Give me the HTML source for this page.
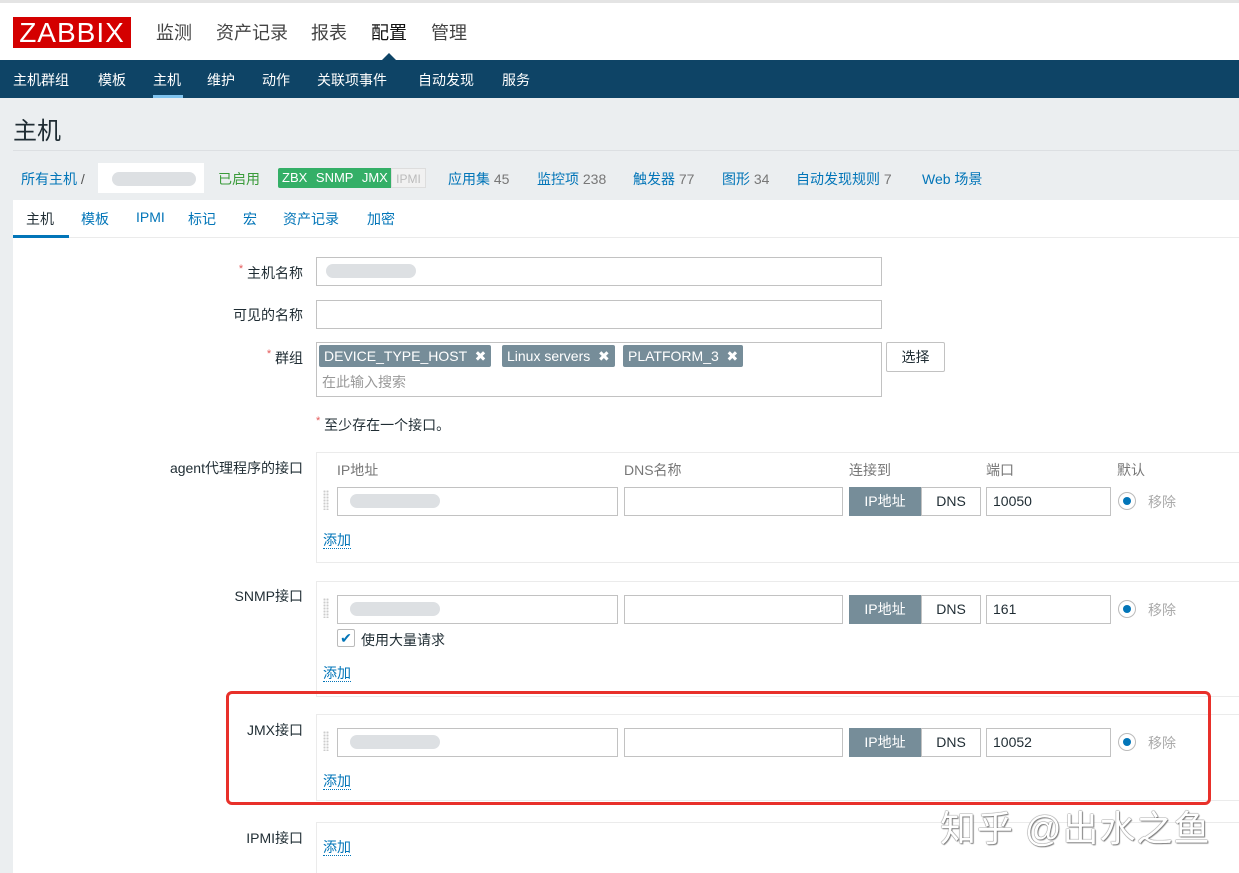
<!DOCTYPE html>
<html><head><meta charset="utf-8"><style>
*{margin:0;padding:0;box-sizing:border-box}
html,body{width:1239px;height:873px;overflow:hidden}
body{position:relative;background:#ebeef0;font-family:"Liberation Sans","Noto Sans CJK SC",sans-serif;font-size:14px;color:#1f2c33}
.a{position:absolute;white-space:nowrap}
.inp{position:absolute;background:#fff;border:1px solid #c2c2c2;height:29px}
.lbl{position:absolute;right:936px;text-align:right;font-size:14px;white-space:nowrap}
.req{color:#e45959;font-size:11px;vertical-align:top}
.box{position:absolute;left:316px;width:930px;border:1px solid #ebebeb;background:#fff}
.lnk{color:#0275b8;border-bottom:1px dotted #0275b8;font-size:14px}
.blur{position:absolute;background:#dde0e3;border-radius:8px;height:14px}
.ipb{position:absolute;background:#768d99;color:#fff;height:29px;width:72px;text-align:center;line-height:28px;font-size:14px}
.dnsb{position:absolute;background:#fff;border:1px solid #c2c2c2;height:29px;width:60px;text-align:center;line-height:27px;font-size:14px}
.rad{position:absolute;width:18px;height:18px;border:1px solid #bbb;border-radius:50%;background:#fff}
.rad:after{content:"";position:absolute;left:4px;top:4px;width:8px;height:8px;border-radius:50%;background:#0275b8}
.drag{position:absolute;width:6px;height:20px;background-image:radial-gradient(#ccc 1px,transparent 1.2px);background-size:3px 3px}
.tag{position:absolute;top:345px;height:22px;background:#768d99;color:#fff;font-size:14px;line-height:22px;padding:0 5px;border-radius:2px}
.nv{position:absolute;top:70px;color:#fff;font-size:14px}
</style></head><body>
<div class="a" style="left:0;top:0;width:1239px;height:60px;background:#fff;border-top:3px solid #e4e4e4"></div>
<div class="a" style="left:13px;top:17px;width:118px;height:31px;background:#d40000;color:#fff;font-size:28px;line-height:31px;text-align:center;letter-spacing:1px">ZABBIX</div>
<div class="a" style="left:156px;top:19px;font-size:18px;color:#444">监测</div>
<div class="a" style="left:216px;top:19px;font-size:18px;color:#444">资产记录</div>
<div class="a" style="left:311px;top:19px;font-size:18px;color:#444">报表</div>
<div class="a" style="left:371px;top:19px;font-size:18px;color:#111">配置</div>
<div class="a" style="left:431px;top:19px;font-size:18px;color:#444">管理</div>
<div class="a" style="left:0;top:60px;width:1239px;height:38px;background:#0e4466"></div>
<div class="a" style="left:382px;top:53px;width:0;height:0;border-left:7px solid transparent;border-right:7px solid transparent;border-bottom:7px solid #0e4466"></div>
<div class="nv" style="left:13px">主机群组</div>
<div class="nv" style="left:98px">模板</div>
<div class="nv" style="left:153px">主机</div>
<div class="nv" style="left:207px">维护</div>
<div class="nv" style="left:262px">动作</div>
<div class="nv" style="left:317px">关联项事件</div>
<div class="nv" style="left:418px">自动发现</div>
<div class="nv" style="left:502px">服务</div>
<div class="a" style="left:153px;top:95px;width:30px;height:3px;background:#7fc3ee"></div>
<div class="a" style="left:13px;top:111px;font-size:24px;color:#1f2c33">主机</div>
<div class="a" style="left:13px;top:150px;width:1226px;height:1px;background:#dcdfe2"></div>
<div class="a" style="left:21px;top:169px;color:#0275b8">所有主机 <span style="color:#555">/</span></div>
<div class="a" style="left:98px;top:163px;width:106px;height:30px;background:#fff"></div>
<div class="blur" style="left:112px;top:172px;width:84px"></div>
<div class="a" style="left:218px;top:169px;color:#3a9b3a">已启用</div>
<div class="a" style="left:278px;top:168px;width:113px;height:20px;background:#34af67;color:#fff;font-size:13px;line-height:20px;padding-left:4px;word-spacing:5px;border-radius:2px 0 0 2px">ZBX SNMP JMX</div>
<div class="a" style="left:391px;top:168px;width:35px;height:20px;background:#f1f1f1;color:#bbb;font-size:12px;line-height:20px;text-align:center;border:1px solid #ddd">IPMI</div>
<div class="a" style="left:448px;top:169px;color:#0275b8">应用集 <span style="color:#777">45</span></div>
<div class="a" style="left:537px;top:169px;color:#0275b8">监控项 <span style="color:#777">238</span></div>
<div class="a" style="left:633px;top:169px;color:#0275b8">触发器 <span style="color:#777">77</span></div>
<div class="a" style="left:722px;top:169px;color:#0275b8">图形 <span style="color:#777">34</span></div>
<div class="a" style="left:796px;top:169px;color:#0275b8">自动发现规则 <span style="color:#777">7</span></div>
<div class="a" style="left:922px;top:169px;color:#0275b8">Web 场景</div>
<div class="a" style="left:13px;top:200px;width:1226px;height:673px;background:#fff"></div>
<div class="a" style="left:13px;top:237px;width:1226px;height:1px;background:#ebebeb"></div>
<div class="a" style="left:13px;top:235px;width:56px;height:3px;background:#0275b8"></div>
<div class="a" style="left:26px;top:209px;color:#1f2c33">主机</div>
<div class="a" style="left:81px;top:209px;color:#0275b8">模板</div>
<div class="a" style="left:136px;top:209px;color:#0275b8">IPMI</div>
<div class="a" style="left:188px;top:209px;color:#0275b8">标记</div>
<div class="a" style="left:243px;top:209px;color:#0275b8">宏</div>
<div class="a" style="left:283px;top:209px;color:#0275b8">资产记录</div>
<div class="a" style="left:367px;top:209px;color:#0275b8">加密</div>

<div class="lbl" style="top:263px"><span class="req">*</span> 主机名称</div>
<div class="inp" style="left:316px;top:257px;width:566px"></div>
<div class="blur" style="left:326px;top:264px;width:90px"></div>
<div class="lbl" style="top:305px">可见的名称</div>
<div class="inp" style="left:316px;top:300px;width:566px"></div>
<div class="lbl" style="top:348px"><span class="req">*</span> 群组</div>
<div class="inp" style="left:316px;top:342px;width:566px;height:55px"></div>
<div class="tag" style="left:319px">DEVICE_TYPE_HOST &nbsp;✖</div>
<div class="tag" style="left:502px">Linux servers &nbsp;✖</div>
<div class="tag" style="left:623px">PLATFORM_3 &nbsp;✖</div>
<div class="a" style="left:322px;top:372px;color:#999">在此输入搜索</div>
<div class="a" style="left:886px;top:342px;width:59px;height:30px;border:1px solid #c2c2c2;border-radius:2px;background:#fff;text-align:center;line-height:28px">选择</div>
<div class="a" style="left:316px;top:415px"><span class="req">*</span> 至少存在一个接口。</div>

<div class="lbl" style="top:458px">agent代理程序的接口</div>
<div class="box" style="top:452px;height:111px"></div>
<div class="a" style="left:337px;top:460px;color:#777">IP地址</div>
<div class="a" style="left:624px;top:460px;color:#777">DNS名称</div>
<div class="a" style="left:849px;top:460px;color:#777">连接到</div>
<div class="a" style="left:986px;top:460px;color:#777">端口</div>
<div class="a" style="left:1117px;top:460px;color:#777">默认</div>
<div class="drag" style="left:323px;top:490px"></div>
<div class="inp" style="left:337px;top:487px;width:281px"></div>
<div class="blur" style="left:350px;top:494px;width:90px"></div>
<div class="inp" style="left:624px;top:487px;width:219px"></div>
<div class="ipb" style="left:849px;top:487px">IP地址</div>
<div class="dnsb" style="left:921px;top:487px">DNS</div>
<div class="inp" style="left:986px;top:487px;width:125px;padding-left:6px;line-height:27px">10050</div>
<div class="rad" style="left:1118px;top:492px"></div>
<div class="a" style="left:1148px;top:492px;color:#aaa">移除</div>
<div class="a" style="left:323px;top:530px"><span class="lnk">添加</span></div>

<div class="lbl" style="top:586px">SNMP接口</div>
<div class="box" style="top:581px;height:116px"></div>
<div class="drag" style="left:323px;top:598px"></div>
<div class="inp" style="left:337px;top:595px;width:281px"></div>
<div class="blur" style="left:350px;top:602px;width:90px"></div>
<div class="inp" style="left:624px;top:595px;width:219px"></div>
<div class="ipb" style="left:849px;top:595px">IP地址</div>
<div class="dnsb" style="left:921px;top:595px">DNS</div>
<div class="inp" style="left:986px;top:595px;width:125px;padding-left:6px;line-height:27px">161</div>
<div class="rad" style="left:1118px;top:600px"></div>
<div class="a" style="left:1148px;top:600px;color:#aaa">移除</div>
<div class="a" style="left:337px;top:629px;width:18px;height:18px;border:1px solid #bbb;border-radius:2px;color:#0275b8;font-size:14px;line-height:16px;text-align:center">✔</div>
<div class="a" style="left:361px;top:630px">使用大量请求</div>
<div class="a" style="left:323px;top:663px"><span class="lnk">添加</span></div>

<div class="lbl" style="top:720px">JMX接口</div>
<div class="box" style="top:714px;height:87px"></div>
<div class="drag" style="left:323px;top:731px"></div>
<div class="inp" style="left:337px;top:728px;width:281px"></div>
<div class="blur" style="left:350px;top:735px;width:90px"></div>
<div class="inp" style="left:624px;top:728px;width:219px"></div>
<div class="ipb" style="left:849px;top:728px">IP地址</div>
<div class="dnsb" style="left:921px;top:728px">DNS</div>
<div class="inp" style="left:986px;top:728px;width:125px;padding-left:6px;line-height:27px">10052</div>
<div class="rad" style="left:1118px;top:733px"></div>
<div class="a" style="left:1148px;top:733px;color:#aaa">移除</div>
<div class="a" style="left:323px;top:771px"><span class="lnk">添加</span></div>

<div class="lbl" style="top:828px">IPMI接口</div>
<div class="box" style="top:822px;height:60px"></div>
<div class="a" style="left:323px;top:837px"><span class="lnk">添加</span></div>

<div class="a" style="left:226px;top:691px;width:985px;height:114px;border:3px solid #e8302a;border-radius:6px"></div>
<div class="a" style="left:940px;top:800px;font-size:36px;letter-spacing:1px;color:#fff;text-shadow:0 0 1px #666,0 0 1px #666,1px 1px 1px #888">知乎 @出水之鱼</div>
</body></html>
